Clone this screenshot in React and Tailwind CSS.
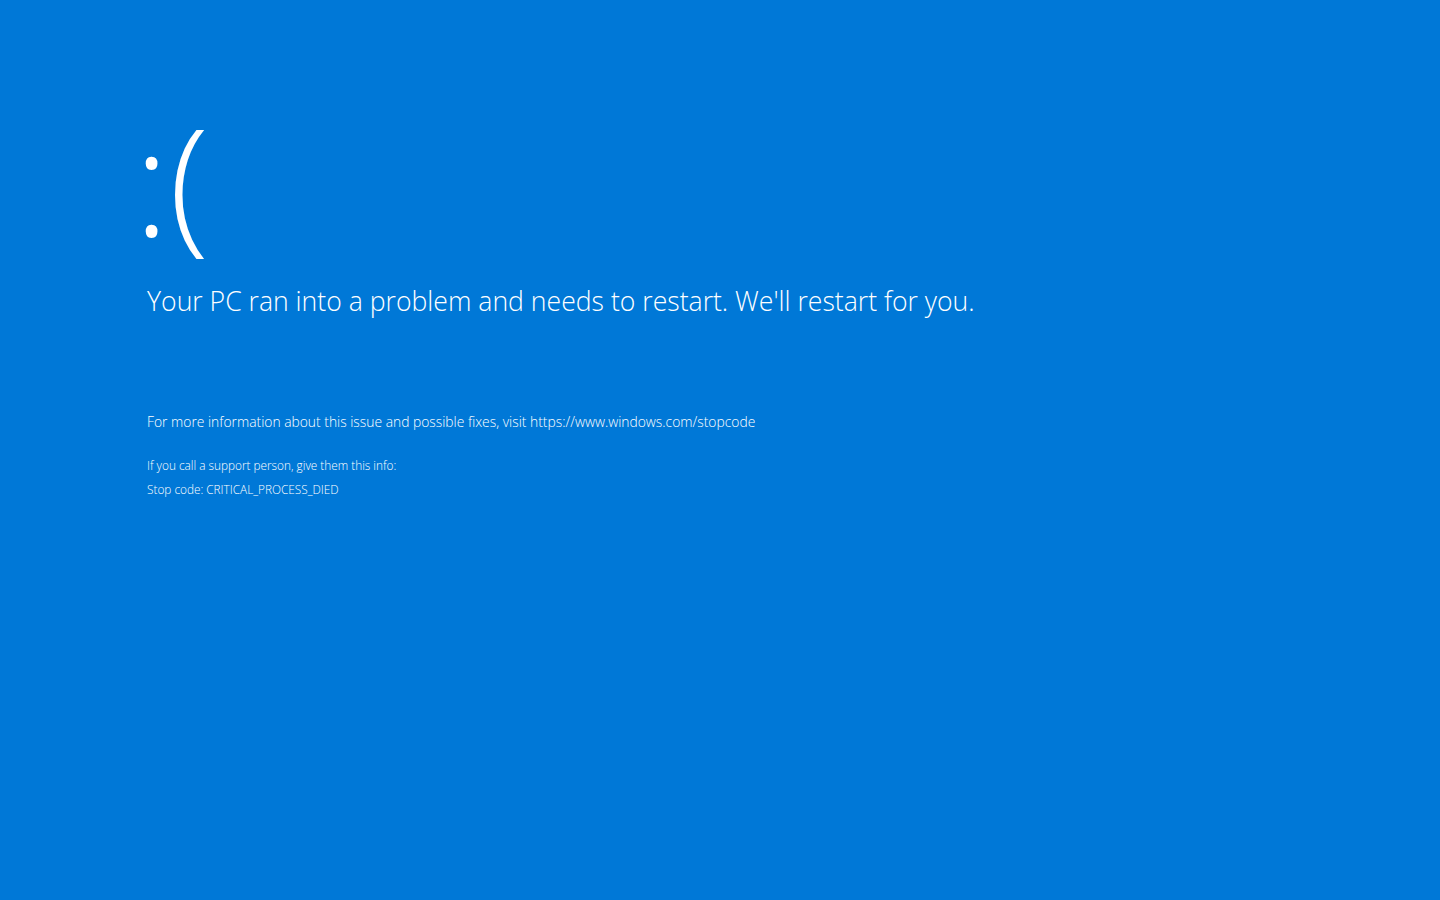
import React from "react";

const App = () => {
  return (
    <div
      className="w-[1440px] h-[900px] bg-[#0078d7] text-white overflow-hidden"
      style={{ fontFamily: '"Open Sans", "Noto Sans", sans-serif' }}
    >
      <div className="pl-[147px] pt-[106px] flex flex-col items-start">
        {/* sad face */}
        <div className="-ml-[13px] text-[147px] leading-none font-light">:(</div>
        <p className="mt-[35px] text-[26.6px] leading-none font-light">
          Your PC ran into a problem and needs to restart. We'll restart for you.
        </p>
        <p className="mt-[100px] text-[13.85px] leading-none font-light">
          For more information about this issue and possible fixes, visit https://www.windows.com/stopcode
        </p>
        <div className="mt-[32px] flex flex-col gap-[12px] text-[11.8px] leading-none font-light">
          <span>If you call a support person, give them this info:</span>
          <span>Stop code: CRITICAL_PROCESS_DIED</span>
        </div>
      </div>
    </div>
  );
};

export default App;
